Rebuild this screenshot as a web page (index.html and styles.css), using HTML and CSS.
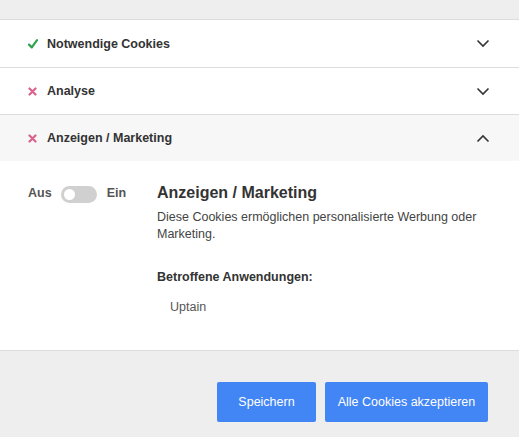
FILE: index.html
```html
<!DOCTYPE html>
<html lang="de">
<head>
<meta charset="utf-8">
<title>Cookie-Einstellungen</title>
<link rel="stylesheet" href="styles.css">
</head>
<body>
<div class="modal">
  <div class="top-band"></div>
  <div class="acc-row first">
    <span class="status">
      <svg width="10" height="10" viewBox="0 0 10 10"><path d="M1 5.6 L3.8 8.4 L9 1.2" fill="none" stroke="#2ea44f" stroke-width="2.2" stroke-linecap="round" stroke-linejoin="round"/></svg>
    </span>
    <span class="label">Notwendige Cookies</span>
    <svg class="chev" width="14" height="9" viewBox="0 0 14 9"><path d="M1.5 1.5 L7 7 L12.5 1.5" fill="none" stroke="#333" stroke-width="1.6"/></svg>
  </div>
  <div class="acc-row">
    <span class="status">
      <svg width="9" height="9" viewBox="0 0 9 9"><path d="M1.5 1.5 L7.5 7.5 M7.5 1.5 L1.5 7.5" fill="none" stroke="#d9628b" stroke-width="2.2" stroke-linecap="round"/></svg>
    </span>
    <span class="label">Analyse</span>
    <svg class="chev" width="14" height="9" viewBox="0 0 14 9"><path d="M1.5 1.5 L7 7 L12.5 1.5" fill="none" stroke="#333" stroke-width="1.6"/></svg>
  </div>
  <div class="acc-row open">
    <span class="status">
      <svg width="9" height="9" viewBox="0 0 9 9"><path d="M1.5 1.5 L7.5 7.5 M7.5 1.5 L1.5 7.5" fill="none" stroke="#d9628b" stroke-width="2.2" stroke-linecap="round"/></svg>
    </span>
    <span class="label">Anzeigen / Marketing</span>
    <svg class="chev" width="14" height="9" viewBox="0 0 14 9"><path d="M1.5 7.5 L7 2 L12.5 7.5" fill="none" stroke="#333" stroke-width="1.6"/></svg>
  </div>
  <div class="panel">
    <div class="switch-col">
      <span class="sw-label">Aus</span>
      <span class="toggle"><span class="knob"></span></span>
      <span class="sw-label">Ein</span>
    </div>
    <div class="info">
      <h2 class="info-title">Anzeigen / Marketing</h2>
      <p class="info-text">Diese Cookies ermöglichen personalisierte Werbung oder Marketing.</p>
      <h3 class="apps-title">Betroffene Anwendungen:</h3>
      <ul class="apps">
        <li>Uptain</li>
      </ul>
    </div>
  </div>
  <div class="footer">
    <button class="btn btn-save">Speichern</button>
    <button class="btn btn-all">Alle Cookies akzeptieren</button>
  </div>
</div>
</body>
</html>
```
FILE: styles.css
```css
* { box-sizing: border-box; }
html, body { margin: 0; padding: 0; }
body {
  font-family: "Liberation Sans", Arial, sans-serif;
  color: #333;
  background: #eee;
  width: 519px;
  height: 437px;
  overflow: hidden;
}
.modal { display: flex; flex-direction: column; }
.top-band {
  height: 20px;
  background: #eeeeee;
  border-bottom: 1px solid #dcdcdc;
}
.acc-row {
  display: flex;
  align-items: center;
  height: 47px;
  padding: 0 29px 0 28px;
  background: #fff;
  border-bottom: 1px solid #dcdcdc;
}
.acc-row.first { height: 48px; }
.acc-row.open {
  background: #f7f7f7;
  border-bottom: none;
  height: 46px;
}
.status {
  width: 19px;
  display: flex;
  align-items: center;
}
.label {
  font-size: 12.5px;
  font-weight: bold;
  flex: 1;
}
.chev { display: block; }
.panel {
  display: flex;
  background: #fff;
  height: 190px;
  padding: 22px 28px 0 28px;
  border-bottom: 1px solid #dcdcdc;
}
.switch-col {
  display: flex;
  align-items: flex-start;
  width: 129px;
  padding-top: 2px;
}
.sw-label {
  font-size: 12.5px;
  font-weight: bold;
  color: #555;
  line-height: 17px;
}
.toggle {
  width: 36px;
  height: 17px;
  border-radius: 9px;
  background: #d0d0d0;
  margin: 1px 10px 0 9px;
  display: flex;
  align-items: center;
  padding-left: 3px;
}
.knob {
  width: 11px;
  height: 11px;
  border-radius: 50%;
  background: #fff;
}
.info { flex: 1; }
.info-title {
  margin: 0;
  font-size: 16px;
  font-weight: bold;
  line-height: 20px;
  color: #333;
}
.info-text {
  margin: 6px 0 0 0;
  font-size: 12.5px;
  line-height: 17px;
  color: #444;
}
.apps-title {
  margin: 26px 0 0 0;
  font-size: 12.5px;
  font-weight: bold;
  line-height: 17px;
}
.apps {
  list-style: none;
  margin: 13px 0 0 0;
  padding: 0 0 0 13px;
  font-size: 12.5px;
  line-height: 17px;
  color: #555;
}
.footer {
  display: flex;
  justify-content: flex-end;
  gap: 9px;
  padding: 31px 31px 0 0;
  background: #eee;
  height: 86px;
}
.btn {
  font-family: "Liberation Sans", Arial, sans-serif;
  background: #4285f4;
  color: #fff;
  border: none;
  border-radius: 2px;
  height: 40px;
  font-size: 12.5px;
  padding: 0;
}
.btn-save { width: 99px; }
.btn-all { width: 163px; }
```
